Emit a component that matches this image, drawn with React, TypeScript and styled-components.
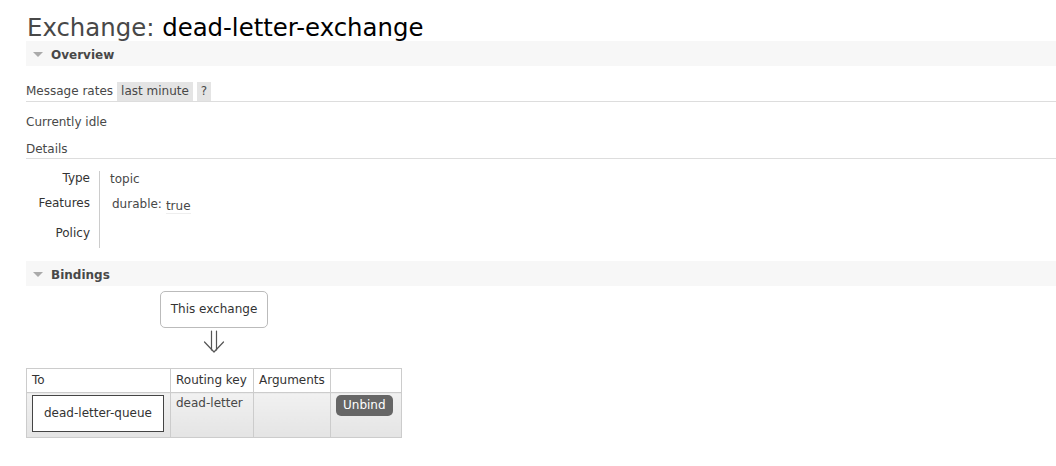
import styled, { createGlobalStyle } from 'styled-components';

const TEXT = '#484848';
const LINE = '#dddddd';
const CELL_BORDER = '#cccccc';

const GlobalStyle = createGlobalStyle`
  html, body {
    margin: 0;
    padding: 0;
    background: #ffffff;
  }
  body {
    font-family: 'DejaVu Sans', Verdana, sans-serif;
    font-size: 12px;
    color: ${TEXT};
  }
`;

const Page = styled.div`
  padding-left: 26px;
  width: 1030px;
`;

const Title = styled.h1`
  margin: 0;
  padding: 15px 0 0 1px;
  font-size: 24.4px;
  line-height: 25px;
  font-weight: normal;
  color: ${TEXT};
  white-space: nowrap;

  b {
    font-weight: normal;
    color: #000;
  }
`;

const SectionBar = styled.div<{ $top: number }>`
  display: flex;
  align-items: center;
  height: 25px;
  margin-top: ${(p) => p.$top}px;
  padding: 2px 0 0 7px;
  box-sizing: border-box;
  background: #f7f7f7;
  font-weight: bold;
  color: ${TEXT};
`;

const Caret = styled.span`
  width: 0;
  height: 0;
  margin-right: 8px;
  margin-top: -1px;
  border-left: 5px solid transparent;
  border-right: 5px solid transparent;
  border-top: 5px solid #aaaaaa;
`;

const RatesRow = styled.div`
  display: flex;
  align-items: center;
  margin-top: 16px;
  line-height: 19px;
  border-bottom: 1px solid ${LINE};
`;

const Chip = styled.span<{ $gap: number }>`
  margin-left: ${(p) => p.$gap}px;
  padding: 0 4px;
  background: #e4e4e4;
  color: ${TEXT};
`;

const Idle = styled.p`
  margin: 11px 0 0;
  line-height: 19px;
`;

const SubHeading = styled.h3`
  margin: 8px 0 0;
  font-size: 12px;
  font-weight: normal;
  line-height: 18px;
  border-bottom: 1px solid ${LINE};
`;

const Facts = styled.div`
  display: grid;
  grid-template-columns: 74px auto;
  grid-template-rows: 25px 30px 22px;
  margin-top: 12px;
  line-height: 14px;
`;

const FactLabel = styled.div`
  padding-right: 9px;
  text-align: right;
  border-right: 1px solid ${CELL_BORDER};
  color: #333;
`;

const FactValue = styled.div<{ $indent?: number }>`
  padding: 1px 0 0 ${(p) => 10 + (p.$indent ?? 0)}px;
`;

const Flag = styled.abbr`
  position: relative;
  top: 2px;
  margin-left: 4px;
  text-decoration: none;
  border-bottom: 1px solid #eeeeee;
`;

const Diagram = styled.div`
  display: inline-flex;
  flex-direction: column;
  align-items: center;
  margin-top: 5px;
`;

const NodeBox = styled.span<{ $queue?: boolean }>`
  display: inline-block;
  height: 37px;
  padding: 0 ${(p) => (p.$queue ? 11 : 10)}px;
  box-sizing: border-box;
  line-height: 35px;
  background: #ffffff;
  border: 1px solid ${(p) => (p.$queue ? '#444444' : '#bbbbbb')};
  border-radius: ${(p) => (p.$queue ? 0 : 5)}px;
  color: #333;
  white-space: nowrap;
`;

const Arrow = styled.svg`
  display: block;
  margin: 2px 0 14px;
`;

const BindingTable = styled.table`
  width: 375px;
  border-collapse: collapse;
  table-layout: fixed;

  th,
  td {
    border: 1px solid ${CELL_BORDER};
    text-align: left;
    vertical-align: top;
    white-space: nowrap;
    line-height: 17px;
  }

  th {
    padding: 3px 5px;
    font-weight: normal;
    color: #333;
    background: #ffffff;
  }

  td {
    padding: 2px 5px 5px;
    background: linear-gradient(#f1f1f1, #e4e4e4);
  }
`;

const UnbindButton = styled.button`
  height: 21px;
  padding: 0 7px;
  border: none;
  border-radius: 5px;
  background: #666666;
  color: #ffffff;
  font: 12px 'DejaVu Sans', Verdana, sans-serif;
  line-height: 21px;
`;

export default function App() {
  return (
    <Page>
      <GlobalStyle />
      <Title>
        Exchange: <b>dead-letter-exchange</b>
      </Title>

      <SectionBar $top={1}>
        <Caret />
        Overview
      </SectionBar>
      <RatesRow>
        Message rates
        <Chip $gap={4}>last minute</Chip>
        <Chip $gap={4}>?</Chip>
      </RatesRow>
      <Idle>Currently idle</Idle>
      <SubHeading>Details</SubHeading>
      <Facts>
        <FactLabel>Type</FactLabel>
        <FactValue>topic</FactValue>
        <FactLabel>Features</FactLabel>
        <FactValue $indent={2}>
          durable:<Flag title="durable">true</Flag>
        </FactValue>
        <FactLabel>Policy</FactLabel>
        <FactValue />
      </Facts>

      <SectionBar $top={13}>
        <Caret />
        Bindings
      </SectionBar>
      <Diagram>
        <NodeBox>This exchange</NodeBox>
        <Arrow width="22" height="24" viewBox="0 0 22 24">
          <g fill="none" stroke="#555" strokeWidth="1.2" strokeLinecap="round" strokeLinejoin="round">
            <line x1="8.5" y1="1" x2="8.5" y2="20" />
            <line x1="13.5" y1="1" x2="13.5" y2="20" />
            <polyline points="1.5,12 11,22 20.5,12" />
          </g>
        </Arrow>
        <BindingTable>
          <colgroup>
            <col style={{ width: 144 }} />
            <col style={{ width: 83 }} />
            <col style={{ width: 77 }} />
            <col style={{ width: 71 }} />
          </colgroup>
          <thead>
            <tr>
              <th>To</th>
              <th>Routing key</th>
              <th>Arguments</th>
              <th></th>
            </tr>
          </thead>
          <tbody>
            <tr>
              <td>
                <NodeBox $queue>dead-letter-queue</NodeBox>
              </td>
              <td>dead-letter</td>
              <td></td>
              <td>
                <UnbindButton>Unbind</UnbindButton>
              </td>
            </tr>
          </tbody>
        </BindingTable>
      </Diagram>
    </Page>
  );
}
